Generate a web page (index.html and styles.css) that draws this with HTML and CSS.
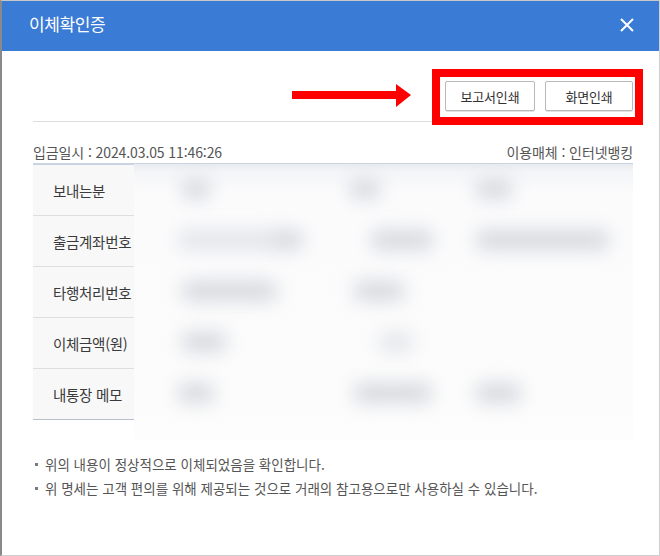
FILE: index.html
```html
<!DOCTYPE html>
<html lang="ko">
<head>
<meta charset="utf-8">
<title>이체확인증</title>
<link rel="stylesheet" href="styles.css">
</head>
<body>
<div class="window">
  <div class="header">
    <h1 class="title">이체확인증</h1>
    <svg class="close" width="14" height="14" viewBox="0 0 14 14"><path d="M1 1L13 13M13 1L1 13" stroke="#fff" stroke-width="2" fill="none"/></svg>
  </div>
  <div class="content">
    <div class="toolbar">
      <button class="btn btn-report">보고서인쇄</button>
      <button class="btn btn-screen">화면인쇄</button>
    </div>
    <div class="info">
      <span>입금일시 : 2024.03.05 11:46:26</span>
      <span>이용매체 : 인터넷뱅킹</span>
    </div>
    <div class="table-wrap">
      <div class="table">
        <div class="row"><div class="label">보내는분</div><div class="value"></div></div>
        <div class="row"><div class="label">출금계좌번호</div><div class="value"></div></div>
        <div class="row"><div class="label">타행처리번호</div><div class="value"></div></div>
        <div class="row"><div class="label">이체금액(원)</div><div class="value"></div></div>
        <div class="row"><div class="label">내통장 메모</div><div class="value"></div></div>
      </div>
      <div class="redact">
        <span class="blob" style="left:47px;top:15px;width:30px"></span>
        <span class="blob" style="left:215px;top:15px;width:32px"></span>
        <span class="blob" style="left:341px;top:15px;width:38px"></span>
        <span class="blob light" style="left:43px;top:66px;width:100px"></span>
        <span class="blob" style="left:136px;top:66px;width:34px"></span>
        <span class="blob" style="left:236px;top:66px;width:64px"></span>
        <span class="blob" style="left:341px;top:66px;width:135px"></span>
        <span class="blob" style="left:47px;top:117px;width:97px"></span>
        <span class="blob" style="left:219px;top:117px;width:52px"></span>
        <span class="blob" style="left:47px;top:168px;width:46px"></span>
        <span class="blob light" style="left:245px;top:168px;width:34px"></span>
        <span class="blob" style="left:43px;top:219px;width:38px"></span>
        <span class="blob" style="left:219px;top:219px;width:80px"></span>
        <span class="blob" style="left:341px;top:219px;width:47px"></span>
      </div>
    </div>
    <ul class="notes">
      <li>위의 내용이 정상적으로 이체되었음을 확인합니다.</li>
      <li>위 명세는 고객 편의를 위해 제공되는 것으로 거래의 참고용으로만 사용하실 수 있습니다.</li>
    </ul>
  </div>
  <div class="mark-box"></div>
  <svg class="mark-arrow" width="122" height="26" viewBox="0 0 122 26"><polygon points="2,8 106,8 106,1 121,12 106,24 106,16 2,16" fill="#ff0000"/></svg>
</div>
</body>
</html>
```

FILE: styles.css
```css
* { box-sizing: border-box; }
html, body { margin: 0; padding: 0; background: #fff; }
body { font-family: "Noto Sans CJK KR", "Noto Sans", sans-serif; }

.window {
  position: relative;
  width: 660px;
  height: 556px;
  border-top: 1px solid #c8c8c8;
  border-left: 2px solid #8a8a8a;
  border-right: 1px solid #cfcfcf;
  border-bottom: 1px solid #cfcfcf;
  background: #fff;
  overflow: hidden;
}

.header {
  height: 50px;
  background: #3a7bd5;
  display: flex;
  align-items: center;
  justify-content: space-between;
  padding: 0 25px 5px 27px;
}
.title {
  margin: 0;
  font-size: 17px;
  font-weight: 400;
  line-height: 20px;
  color: #fff;
  letter-spacing: -0.4px;
}
.close { display: block; margin-top: 2px; }

.content { padding: 0 26px 0 31px; }

.toolbar {
  display: flex;
  justify-content: flex-end;
  gap: 10px;
  padding: 30px 0 10px;
  border-bottom: 1px solid #dcdcdc;
}
.btn {
  height: 30px;
  background: #fff;
  border: 1px solid #b9b9b9;
  border-radius: 2px;
  box-shadow: 0 1px 0 #e2e2e2;
  font-family: inherit;
  font-size: 13px;
  letter-spacing: -0.2px;
  color: #333;
  padding: 0;
}
.btn-report { width: 90px; }
.btn-screen { width: 88px; }

.info {
  display: flex;
  justify-content: space-between;
  padding: 20px 0 1px;
  font-size: 14px;
  line-height: 20px;
  color: #555;
  letter-spacing: -0.1px;
}

.table-wrap { position: relative; }
.table { border-top: 2px solid #c9d4e3; }
.row {
  display: flex;
  height: 51px;
  border-bottom: 1px solid #dedede;
}
.row:last-child { border-bottom-color: #b7bfce; }
.label {
  width: 101px;
  background: #f8f8f9;
  padding-left: 20px;
  display: flex;
  align-items: center;
  font-size: 14.5px;
  letter-spacing: -0.3px;
  color: #3a3a3a;
  white-space: nowrap;
}
.value { flex: 1; }

.redact {
  position: absolute;
  left: 101px;
  top: 1px;
  right: 0;
  height: 276px;
  background: linear-gradient(to bottom, #e8ebef 0, #f4f5f7 8px, #fbfbfc 28px, #fcfcfc 250px, #fdfdfd 100%);
  overflow: hidden;
}
.blob {
  position: absolute;
  height: 20px;
  border-radius: 10px;
  background: #d6d9df;
  filter: blur(9px);
}
.blob.light { background: #e3e5e9; }

.notes {
  list-style: none;
  margin: 32px 0 0;
  padding: 0;
  font-size: 13.5px;
  line-height: 24px;
  color: #555;
  letter-spacing: 0;
}
.notes li {
  position: relative;
  padding-left: 12px;
}
.notes li::before {
  content: "";
  position: absolute;
  left: 2px;
  top: 11px;
  width: 3px;
  height: 3px;
  background: #7a7a7a;
}

.mark-box {
  position: absolute;
  left: 430px;
  top: 68px;
  width: 211px;
  height: 56px;
  border: 8px solid #ff0000;
}
.mark-arrow {
  position: absolute;
  left: 288px;
  top: 82px;
}
```
